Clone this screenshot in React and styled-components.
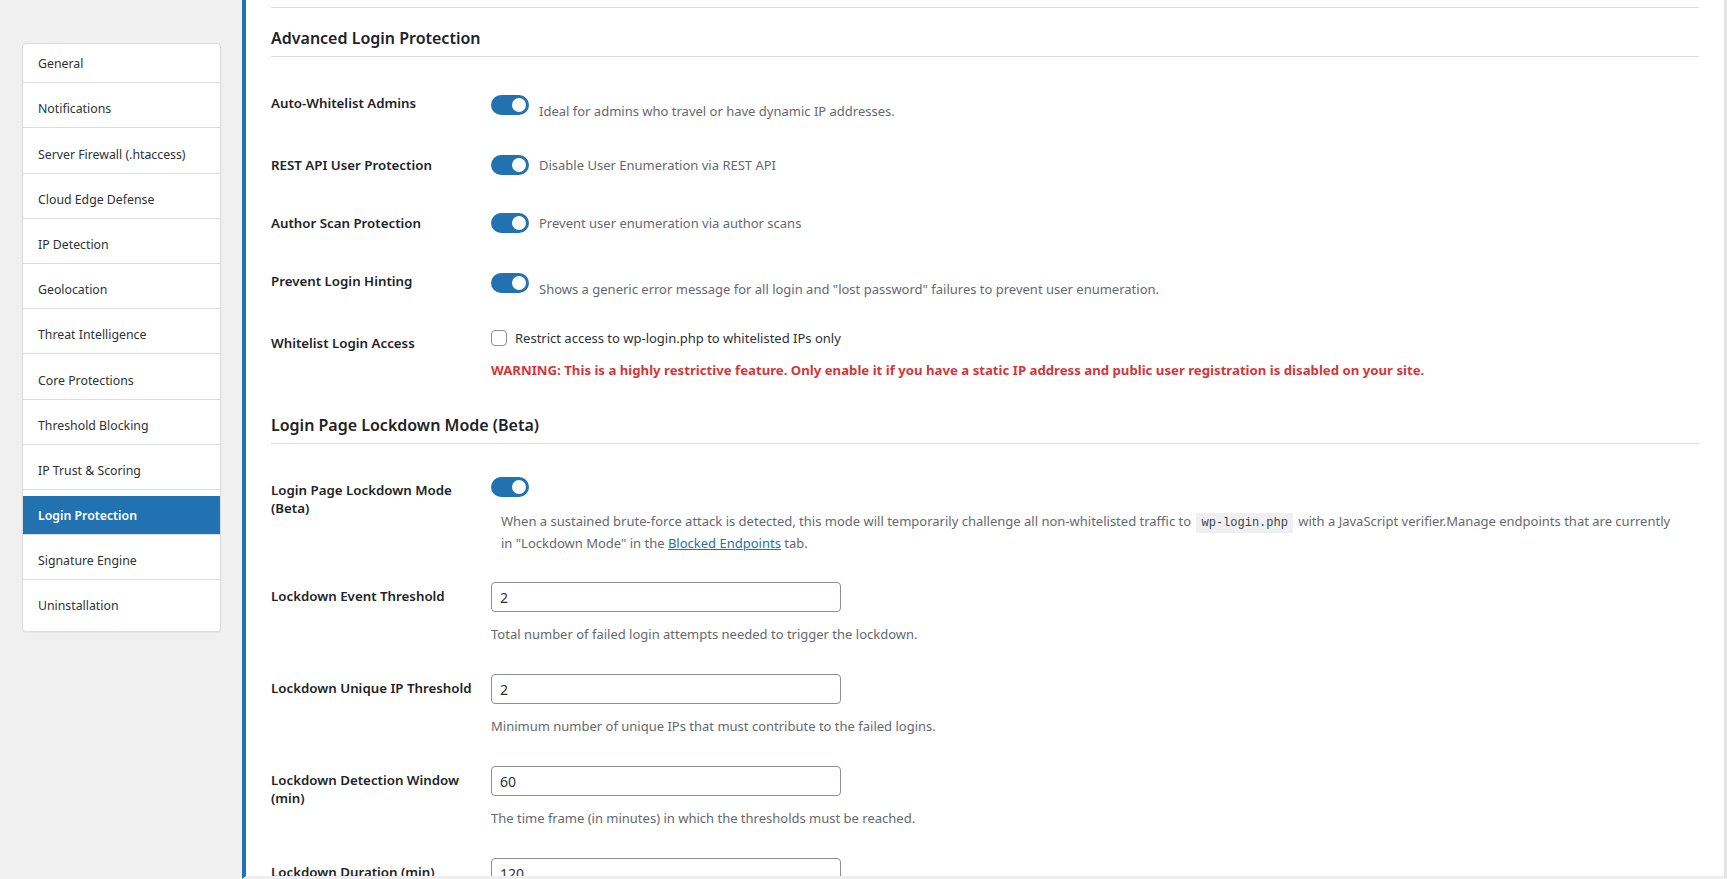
import styled, { createGlobalStyle } from "styled-components";

const GlobalStyle = createGlobalStyle`
  html, body {
    margin: 0;
    padding: 0;
    height: 100%;
  }
  body {
    background: #f0f0f1;
    font-family: "Noto Sans", "Open Sans", sans-serif;
    color: #2c3338;
    overflow: hidden;
  }
  * {
    box-sizing: border-box;
  }
`;

const Shell = styled.div`
  display: flex;
  height: 100vh;
`;

const Sidebar = styled.aside`
  width: 242px;
  flex-shrink: 0;
  padding: 43px 21px 0 22px;
`;

const NavCard = styled.ul`
  list-style: none;
  margin: 0;
  padding: 0 0 7px;
  background: #fff;
  border: 1px solid #dcdcde;
  border-radius: 4px;
  box-shadow: 0 1px 1px rgba(0, 0, 0, 0.04);
`;

const NavItem = styled.li`
  padding-top: ${(p) => p.$gap}px;
  border-bottom: 1px solid #dcdcde;
  &:last-child {
    border-bottom: none;
  }
`;

const NavLink = styled.a`
  display: flex;
  align-items: center;
  height: 38px;
  padding-left: 15px;
  font-size: 12.3px;
  text-decoration: none;
  color: ${(p) => (p.$active ? "#fff" : "#2c3338")};
  background: ${(p) => (p.$active ? "#2271b1" : "transparent")};
  font-weight: ${(p) => (p.$active ? 600 : 400)};
`;

const Panel = styled.main`
  flex: 1;
  min-width: 0;
  background: #fff;
  border-left: 4px solid #2271b1;
  border-right: 3px solid #e4e4e4;
  border-bottom: 3px solid #efefef;
  padding: 7px 25px 0;
  overflow: hidden;
`;

const TopRule = styled.div`
  border-top: 1px solid #dcdcde;
`;

const SectionTitle = styled.h2`
  margin: ${(p) => p.$top} 0 17px;
  padding-bottom: 7px;
  border-bottom: 1px solid #dcdcde;
  font-size: 16px;
  line-height: 22px;
  font-weight: 600;
  color: #1d2327;
`;

const Row = styled.div`
  display: flex;
  align-items: flex-start;
`;

const Label = styled.div`
  width: 220px;
  flex-shrink: 0;
  padding: 20px 15px 0 0;
  font-size: 13.3px;
  line-height: 18px;
  font-weight: 600;
  color: #1d2327;
`;

const Field = styled.div`
  flex: 1;
  padding: ${(p) => p.$pad || "15px 0"};
`;

const ToggleLine = styled.div`
  display: flex;
  align-items: flex-start;
  gap: 10px;
`;

const Switch = styled.span`
  flex-shrink: 0;
  width: 38px;
  height: 20px;
  border-radius: 10px;
  background: #2271b1;
  display: flex;
  align-items: center;
  justify-content: flex-end;
  padding-right: 3px;
  &::after {
    content: "";
    width: 14px;
    height: 14px;
    border-radius: 50%;
    background: #fff;
  }
`;

const Desc = styled.p`
  margin: ${(p) => p.$top || "0"} 0 0 ${(p) => p.$indent || "0"};
  font-size: 13px;
  line-height: 20px;
  color: #646970;
`;

const CheckLine = styled.label`
  display: flex;
  align-items: center;
  gap: 8px;
  font-size: 13px;
  line-height: 20px;
  color: #2c3338;
`;

const Checkbox = styled.span`
  width: 16px;
  height: 16px;
  border: 1px solid #8c8f94;
  border-radius: 4px;
  background: #fff;
  flex-shrink: 0;
`;

const Warning = styled.p`
  margin: 12px 0 0;
  font-size: 13.2px;
  line-height: 20px;
  font-weight: 700;
  color: #d63638;
`;

const Code = styled.code`
  display: inline-block;
  padding: 0 5px;
  margin: 0 2px;
  line-height: 20px;
  font-family: "Liberation Mono", "DejaVu Sans Mono", monospace;
  font-size: 12px;
  color: #3c434a;
  background: #f0f0f1;
`;

const Link = styled.a`
  color: #2271b1;
  text-decoration: underline;
`;

const NumberInput = styled.input`
  display: block;
  width: 350px;
  height: 30px;
  margin: 0;
  padding: 0 8px;
  border: 1px solid #8c8f94;
  border-radius: 4px;
  background: #fff;
  font-family: inherit;
  font-size: 14px;
  color: #2c3338;
  outline: none;
`;

// gap above each tab link (first tab sits flush with the card top)
const tabs = [
  ["General", 0],
  ["Notifications", 6],
  ["Server Firewall (.htaccess)", 7],
  ["Cloud Edge Defense", 6],
  ["IP Detection", 6],
  ["Geolocation", 6],
  ["Threat Intelligence", 6],
  ["Core Protections", 7],
  ["Threshold Blocking", 6],
  ["IP Trust & Scoring", 6],
  ["Login Protection", 6],
  ["Signature Engine", 6],
  ["Uninstallation", 6],
];

const toggles = [
  {
    label: "Auto-Whitelist Admins",
    text: "Ideal for admins who travel or have dynamic IP addresses.",
    drop: true,
  },
  {
    label: "REST API User Protection",
    text: "Disable User Enumeration via REST API",
  },
  {
    label: "Author Scan Protection",
    text: "Prevent user enumeration via author scans",
  },
  {
    label: "Prevent Login Hinting",
    text: 'Shows a generic error message for all login and "lost password" failures to prevent user enumeration.',
    drop: true,
  },
];

const thresholds = [
  {
    label: "Lockdown Event Threshold",
    value: "2",
    text: "Total number of failed login attempts needed to trigger the lockdown.",
  },
  {
    label: "Lockdown Unique IP Threshold",
    value: "2",
    text: "Minimum number of unique IPs that must contribute to the failed logins.",
  },
  {
    label: "Lockdown Detection Window (min)",
    value: "60",
    text: "The time frame (in minutes) in which the thresholds must be reached.",
  },
  {
    label: "Lockdown Duration (min)",
    value: "120",
    text: "How long the login page stays in lockdown once triggered.",
  },
];

const App = () => {
  return (
    <>
      <GlobalStyle />
      <Shell>
        <Sidebar>
          <NavCard>
            {tabs.map(([tab, gap]) => (
              <NavItem key={tab} $gap={gap}>
                <NavLink href="#" $active={tab === "Login Protection"}>
                  {tab}
                </NavLink>
              </NavItem>
            ))}
          </NavCard>
        </Sidebar>

        <Panel>
          <TopRule />
          <SectionTitle $top="19px">Advanced Login Protection</SectionTitle>

          {toggles.map((t) => (
            <Row key={t.label}>
              <Label>{t.label}</Label>
              <Field $pad={t.drop ? "21px 0 15px" : "19px 0 19px"}>
                <ToggleLine>
                  <Switch />
                  <Desc $top={t.drop ? "6px" : "0"}>{t.text}</Desc>
                </ToggleLine>
              </Field>
            </Row>
          ))}

          <Row>
            <Label>Whitelist Login Access</Label>
            <Field $pad="14px 0 15px">
              <CheckLine>
                <Checkbox />
                Restrict access to wp-login.php to whitelisted IPs only
              </CheckLine>
              <Warning>
                WARNING: This is a highly restrictive feature. Only enable it if
                you have a static IP address and public user registration is
                disabled on your site.
              </Warning>
            </Field>
          </Row>

          <SectionTitle $top="19px">Login Page Lockdown Mode (Beta)</SectionTitle>

          <Row>
            <Label>Login Page Lockdown Mode (Beta)</Label>
            <Field $pad="16px 0 14px">
              <Switch />
              <Desc $top="14px" $indent="10px">
                When a sustained brute-force attack is detected, this mode will
                temporarily challenge all non-whitelisted traffic to{" "}
                <Code>wp-login.php</Code> with a JavaScript verifier.Manage
                endpoints that are currently
                <br />
                in "Lockdown Mode" in the <Link href="#">Blocked Endpoints</Link>{" "}
                tab.
              </Desc>
            </Field>
          </Row>

          {thresholds.map((t) => (
            <Row key={t.label}>
              <Label>{t.label}</Label>
              <Field>
                <NumberInput type="text" value={t.value} readOnly />
                <Desc $top="12px">{t.text}</Desc>
              </Field>
            </Row>
          ))}
        </Panel>
      </Shell>
    </>
  );
};

export default App;
